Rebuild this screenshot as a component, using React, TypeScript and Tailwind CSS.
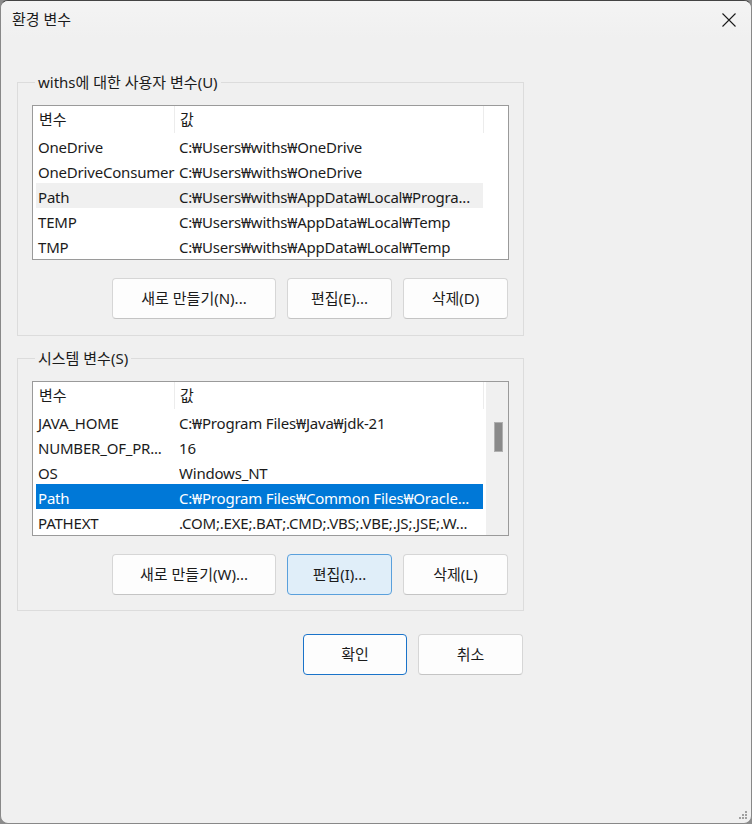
import React from "react";

interface EnvVar {
  name: string;
  value: string;
}

const userVars: EnvVar[] = [
  { name: "OneDrive", value: "C:₩Users₩withs₩OneDrive" },
  { name: "OneDriveConsumer", value: "C:₩Users₩withs₩OneDrive" },
  { name: "Path", value: "C:₩Users₩withs₩AppData₩Local₩Progra..." },
  { name: "TEMP", value: "C:₩Users₩withs₩AppData₩Local₩Temp" },
  { name: "TMP", value: "C:₩Users₩withs₩AppData₩Local₩Temp" },
];

const systemVars: EnvVar[] = [
  { name: "JAVA_HOME", value: "C:₩Program Files₩Java₩jdk-21" },
  { name: "NUMBER_OF_PR...", value: "16" },
  { name: "OS", value: "Windows_NT" },
  { name: "Path", value: "C:₩Program Files₩Common Files₩Oracle..." },
  { name: "PATHEXT", value: ".COM;.EXE;.BAT;.CMD;.VBS;.VBE;.JS;.JSE;.W..." },
];

const FONT = {
  fontFamily: '"Segoe UI", "Noto Sans", "Noto Sans CJK KR", sans-serif',
};

function Button({
  children,
  width,
  variant = "normal",
}: {
  children: React.ReactNode;
  width: string;
  variant?: "normal" | "hover" | "primary";
}) {
  const look =
    variant === "hover"
      ? "bg-[#e0eef9] border-[#5aa0dc]"
      : variant === "primary"
        ? "bg-[#fdfdfd] border-[#1a73c9]"
        : "bg-[#fdfdfd] border-[#d6d6d6] border-b-[#c4c4c4]";
  return (
    <button
      className={`${width} h-[41px] rounded-[4px] border text-[15px] text-[#1b1b1b] flex items-center justify-center ${look}`}
    >
      {children}
    </button>
  );
}

function VarList({
  rows,
  selected,
  selectedActive,
  scrollbar,
}: {
  rows: EnvVar[];
  selected: number;
  selectedActive: boolean;
  scrollbar?: boolean;
}) {
  return (
    <div className="w-[477px] h-[155px] border border-[#9a9a9a] bg-white flex overflow-hidden">
      <div className="flex-1 flex flex-col">
        {/* Header */}
        <div className="h-[27px] flex items-center text-[15px] text-[#1b1b1b] shrink-0">
          <div className="w-[142px] h-full pl-[6px] flex items-center border-r border-[#ececec]">변수</div>
          <div className="w-[309px] h-full pl-[5px] flex items-center border-r border-[#ececec]">값</div>
        </div>
        {/* Rows */}
        <div className="flex flex-col pl-[3px]">
          {rows.map((r, i) => {
            const isSel = i === selected;
            const rowLook = isSel
              ? selectedActive
                ? "bg-[#0078d7] text-white"
                : "bg-[#f0f0f0] text-[#1b1b1b]"
              : "text-[#1b1b1b]";
            return (
              <div
                key={r.name}
                className={`w-[447px] h-[25px] pt-[3px] flex items-center text-[15px] tracking-[-0.2px] whitespace-nowrap ${rowLook}`}
              >
                <div className="w-[143px] pl-[2px] overflow-hidden">{r.name}</div>
                <div className="flex-1 overflow-hidden">{r.value}</div>
              </div>
            );
          })}
        </div>
      </div>
      {scrollbar && (
        <div className="w-[22px] h-full bg-[#f0f0f0] flex flex-col items-center pt-[40px] pl-[2px]">
          <div className="w-[9px] h-[30px] bg-[#8a8a8a] border border-[#b0b0b0]" />
        </div>
      )}
    </div>
  );
}

function Group({ label, children, className }: { label: string; children: React.ReactNode; className?: string }) {
  return (
    <fieldset className={`w-[507px] border border-[#dcdcdc] ${className ?? ""}`}>
      <legend className="ml-[3px] px-[3px] text-[15px] leading-[20px] text-[#1b1b1b]">{label}</legend>
      {children}
    </fieldset>
  );
}

export default function App() {
  return (
    <div className="w-[752px] h-[824px] bg-[#8c8c8c]" style={FONT}>
      <div className="w-full h-full rounded-[8px] border border-[#888888] border-t-[#444444] bg-[#f0f0f0] flex flex-col overflow-hidden relative">
        {/* Title bar */}
        <div className="h-[37px] shrink-0 bg-gradient-to-b from-[#f4f4f4] to-[#f0f0f0] flex items-center justify-between pl-[11px] pr-[14px]">
          <span className="text-[15px] text-[#1b1b1b]">환경 변수</span>
          <svg width="16" height="16" viewBox="0 0 16 16" fill="none" stroke="#1b1b1b" strokeWidth="1.1">
            <path d="M1.5 1.5 L14.5 14.5 M14.5 1.5 L1.5 14.5" />
          </svg>
        </div>

        <div className="pl-[16px] flex flex-col">
          {/* User variables */}
          <Group label="withs에 대한 사용자 변수(U)" className="mt-[34px] pl-[14px] pb-[16px]">
            <div className="mt-[13px]">
              <VarList rows={userVars} selected={2} selectedActive={false} />
            </div>
            <div className="w-[477px] mt-[18px] flex justify-end gap-[11px] pr-[1px]">
              <Button width="w-[164px]">새로 만들기(N)...</Button>
              <Button width="w-[105px]">편집(E)...</Button>
              <Button width="w-[105px]">삭제(D)</Button>
            </div>
          </Group>

          {/* System variables */}
          <Group label="시스템 변수(S)" className="mt-[12px] pl-[14px] pb-[15px]">
            <div className="mt-[13px]">
              <VarList rows={systemVars} selected={3} selectedActive scrollbar />
            </div>
            <div className="w-[477px] mt-[18px] flex justify-end gap-[11px] pr-[1px]">
              <Button width="w-[164px]">새로 만들기(W)...</Button>
              <Button width="w-[105px]" variant="hover">편집(I)...</Button>
              <Button width="w-[105px]">삭제(L)</Button>
            </div>
          </Group>

          {/* Dialog buttons */}
          <div className="w-[507px] mt-[23px] flex justify-end gap-[11px] pr-[1px]">
            <Button width="w-[104px]" variant="primary">확인</Button>
            <Button width="w-[105px]">취소</Button>
          </div>
        </div>

        {/* Resize grip */}
        <svg className="absolute right-[3px] bottom-[3px]" width="10" height="10" viewBox="0 0 10 10" fill="#a0a0a0">
          <rect x="7" y="1" width="2" height="2" />
          <rect x="4" y="4" width="2" height="2" />
          <rect x="7" y="4" width="2" height="2" />
          <rect x="1" y="7" width="2" height="2" />
          <rect x="4" y="7" width="2" height="2" />
          <rect x="7" y="7" width="2" height="2" />
        </svg>
      </div>
    </div>
  );
}
